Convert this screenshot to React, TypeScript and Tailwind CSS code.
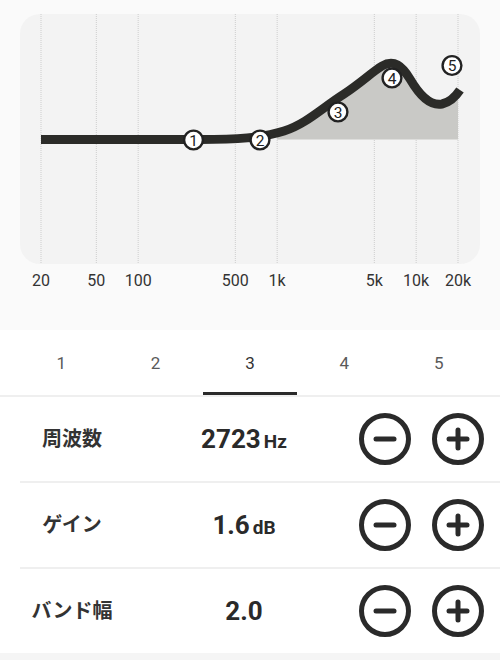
import React from 'react';

const FREQS = [
    { f: 20, label: '20' },
    { f: 50, label: '50' },
    { f: 100, label: '100' },
    { f: 500, label: '500' },
    { f: 1000, label: '1k' },
    { f: 5000, label: '5k' },
    { f: 10000, label: '10k' },
    { f: 20000, label: '20k' },
];

// log scale: 20Hz -> x 41, 20kHz -> x 458 (page coords)
const freqX = (f: number) => 41 + (Math.log10(f / 20) / 3) * 417;

const CURVE =
    'M41 139.5 L200 139.5 C236 139.5 262 138 284 131 C306 124 322 108 344 94 C362 82 372 72 382 66 C394 59 402 66 410 79 C420 96 430 106 442 104 C451 102 456 96 460 90';

const KNOBS = [
    { n: 1, x: 193.5, y: 140 },
    { n: 2, x: 260, y: 140 },
    { n: 3, x: 338, y: 112 },
    { n: 4, x: 392, y: 78 },
    { n: 5, x: 452, y: 65.5 },
];

const ROWS = [
    { label: '周波数', value: '2723', unit: 'Hz' },
    { label: 'ゲイン', value: '1.6', unit: 'dB' },
    { label: 'バンド幅', value: '2.0', unit: '' },
];

function CircleButton({ plus }: { plus?: boolean }) {
    return (
        <button className="w-[52px] h-[52px] flex items-center justify-center">
            <svg width="52" height="52" viewBox="0 0 52 52" fill="none" stroke="#2a2a2a" strokeLinecap="round">
                <circle cx="26" cy="26" r="23.5" strokeWidth="5" />
                <line x1="17" y1="26" x2="35" y2="26" strokeWidth="5" />
                {plus && <line x1="26" y1="17" x2="26" y2="35" strokeWidth="5" />}
            </svg>
        </button>
    );
}

function EqChart() {
    return (
        <div className="bg-[#fafafa] pt-[14px]">
            {/* Curve card */}
            <div className="mx-5 h-[250px] rounded-[20px] bg-[#f3f3f3]">
                <svg width="460" height="250" viewBox="20 14 460 250" className="overflow-visible">
                    <defs>
                        <clipPath id="fillClip">
                            <rect x="277" y="14" width="181" height="250" />
                        </clipPath>
                    </defs>
                    {FREQS.map(({ f }) => (
                        <line
                            key={f}
                            x1={freqX(f)}
                            x2={freqX(f)}
                            y1="14"
                            y2="264"
                            stroke="#cdcdcd"
                            strokeWidth="1"
                            strokeDasharray="1 1"
                        />
                    ))}
                    <path d={`${CURVE} L460 139.5 L41 139.5 Z`} fill="#c9c9c6" clipPath="url(#fillClip)" />
                    <path d={CURVE} fill="none" stroke="#2b2b28" strokeWidth="9" />
                    {KNOBS.map(k => (
                        <g key={k.n}>
                            <circle cx={k.x} cy={k.y} r="9.4" fill="#fff" stroke="#222" strokeWidth="2.4" />
                            <text
                                x={k.x}
                                y={k.y + 5.6}
                                textAnchor="middle"
                                fontSize="15.5"
                                fill="#222"
                                fontFamily="Roboto, sans-serif"
                            >
                                {k.n}
                            </text>
                        </g>
                    ))}
                </svg>
            </div>
            {/* Frequency axis */}
            <div className="relative h-[66px]">
                {FREQS.map(({ f, label }) => (
                    <span
                        key={f}
                        className="absolute top-[7px] -translate-x-1/2 text-[16px] leading-5 text-[#333]"
                        style={{ left: freqX(f) }}
                    >
                        {label}
                    </span>
                ))}
            </div>
        </div>
    );
}

export default function App() {
    const active = 3;
    return (
        <div className="w-[500px] h-[660px] bg-white overflow-hidden font-['Roboto','Noto_Sans_CJK_JP',sans-serif]">
            <EqChart />

            {/* Band tabs */}
            <div className="grid grid-cols-5 px-[14px] pt-[1px]">
                {[1, 2, 3, 4, 5].map(n => (
                    <div
                        key={n}
                        className={`h-[64px] pt-[4px] flex items-center justify-center text-[17px] border-b-[3px] ${
                            n === active ? 'border-[#2a2a2a] text-[#333]' : 'border-transparent text-[#5a5a5a]'
                        }`}
                    >
                        {n}
                    </div>
                ))}
            </div>
            <div className="h-[2px] bg-[#efefef]" />

            {/* Parameter rows */}
            {ROWS.map((row, i) => (
                <div key={row.label} className={i < ROWS.length - 1 ? 'border-b-2 border-[#efefef] ml-5' : ''}>
                    <div className={`h-[84px] flex items-center ${i < ROWS.length - 1 ? '-ml-5' : ''}`}>
                        <div className="w-[144px] text-center text-[20px] font-bold text-[#333]">{row.label}</div>
                        <div className="w-[200px] flex items-baseline justify-center font-bold text-[#2a2a2a]">
                            <span className="text-[26px]">{row.value}</span>
                            {row.unit && <span className="text-[19px] ml-[3px]">{row.unit}</span>}
                        </div>
                        <div className="flex items-center gap-[21px] ml-[15px]">
                            <CircleButton />
                            <CircleButton plus />
                        </div>
                    </div>
                </div>
            ))}
            <div className="h-[10px] bg-[#f5f5f5]" />
        </div>
    );
}
